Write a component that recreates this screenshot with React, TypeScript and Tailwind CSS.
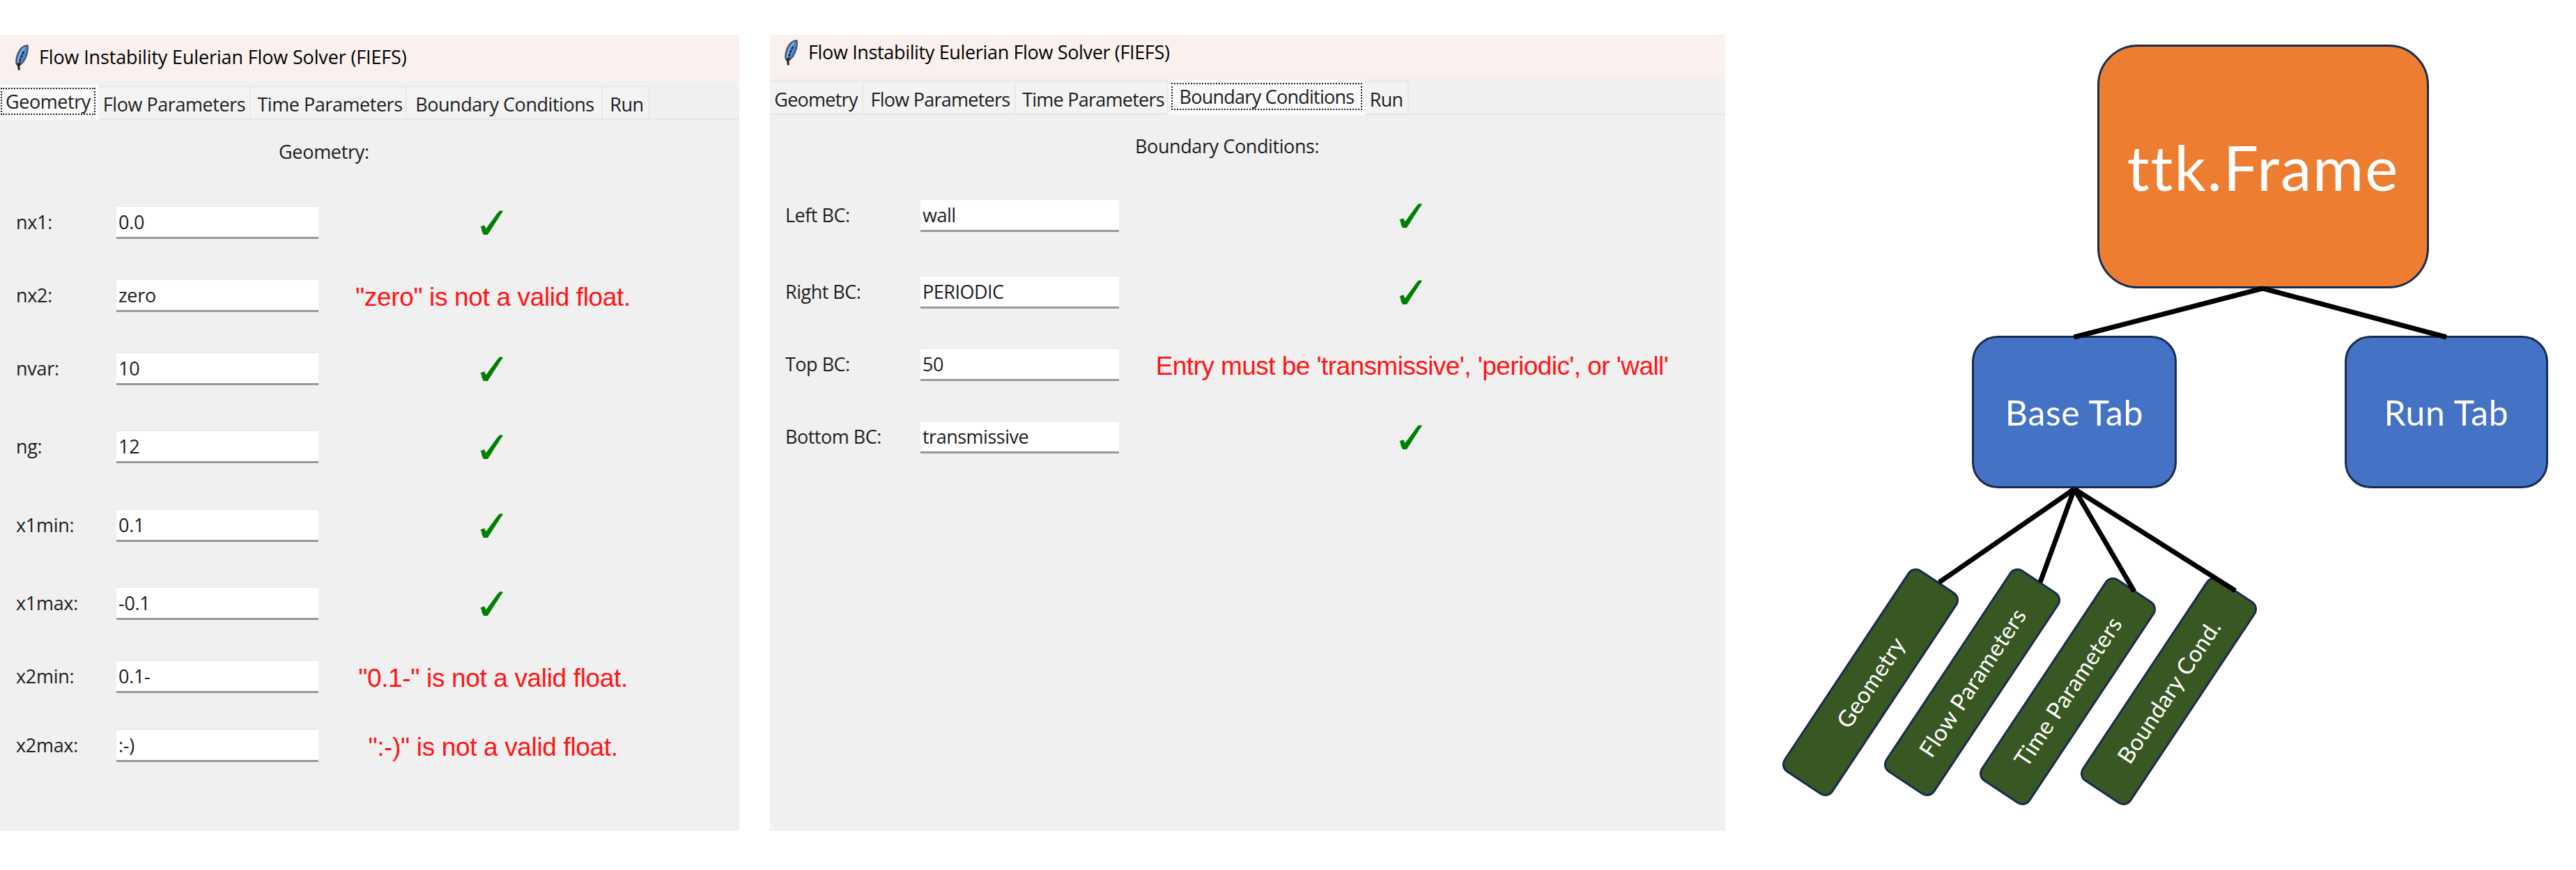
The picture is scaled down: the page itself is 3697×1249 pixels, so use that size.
type Row = { label: string; value: string; error?: string; gap: string };

type WindowProps = {
  tabs: { name: string; width: string }[];
  active: string;
  heading: string;
  headingClass: string;
  rows: Row[];
  windowClass: string;
  titleClass: string;
  titleTextClass: string;
  tabBarClass: string;
  tabClass: string;
  rowClass: string;
  labelClass: string;
  errorClass: string;
};

function Feather() {
  return (
    <svg viewBox="0 0 20 37" className="h-[37px] w-[20px] shrink-0">
      <path
        d="M18.5 1C13 1.5 7.5 6 4.5 13C2.5 18 1.5 24 3 28.5L7 30C11 27 15.5 21.5 17.5 14C18.8 9 19.3 4 18.5 1Z"
        fill="#4a86cf"
        stroke="#4a5058"
        strokeWidth="2"
      />
      <path d="M14.5 4C9 10 5.5 18 5 26" fill="none" stroke="#8fb9ea" strokeWidth="2" />
      <path d="M13 10C9.5 16 7.500 21 6.500 29" fill="none" stroke="#15202e" strokeWidth="2.4" strokeDasharray="4 1.5" />
      <path d="M5 27L6.500 36.500" stroke="#222" strokeWidth="3" />
    </svg>
  );
}

function Check() {
  return (
    <svg viewBox="0 0 33 36" className="h-[36px] w-[33px]">
      <path
        d="M32.500 0.500H28L24 5L19 12L13 20L9.500 25L7.800 25.500L6.500 21.500L3.500 22L0.300 24L2 26L2.500 30L5 35H11L12.500 32.500L15.500 28L20.500 20L25.500 12.500L28.500 7.500L32.500 2Z"
        fill="#008000"
      />
    </svg>
  );
}

function SolverWindow(p: WindowProps) {
  return (
    <section className={"flex h-[1143px] flex-col bg-[#f0f0f0] font-['Open_Sans',sans-serif] text-[27px] leading-[36px] text-[#1c1c22] " + p.windowClass}>
      <header className={"flex items-center bg-[#faf0ee] text-black " + p.titleClass}>
        <Feather />
        <h1 className={"whitespace-nowrap " + p.titleTextClass}>Flow Instability Eulerian Flow Solver (FIEFS)</h1>
      </header>
      <nav className={"flex items-end border-b-[2px] border-[#e6e6e6] " + p.tabBarClass}>
        {p.tabs.map((t) =>
          t.name === p.active ? (
            <div key={t.name} className={"-mb-[2px] flex h-[51px] flex-col bg-[#fafafa] pt-[5px] " + t.width}>
              <div className={"flex h-[39px] items-center justify-center whitespace-nowrap border-[2px] border-dotted border-[#222] pt-px " + p.tabClass}>
                {t.name}
              </div>
            </div>
          ) : (
            <div
              key={t.name}
              className={"flex h-[47px] items-center justify-center whitespace-nowrap border-t-[2px] border-r-[2px] border-[#e8e8e8] bg-[#f3f3f3] pt-[5px] " + p.tabClass + " " + t.width}
            >
              {t.name}
            </div>
          ),
        )}
      </nav>
      <h2 className={"whitespace-nowrap " + p.headingClass}>{p.heading}</h2>
      {p.rows.map((r) => (
        <div key={r.label} className={"grid h-[47px] shrink-0 items-center " + p.rowClass + " " + r.gap}>
          <label className={"pb-[2px] whitespace-nowrap " + p.labelClass}>{r.label}</label>
          <div className="flex h-[47px] items-center border-t border-b-[3px] border-t-[#e8e8e8] border-b-[#999] bg-white pl-[3px]">
            {r.value}
          </div>
          <div className="flex justify-center">
            {r.error ? (
              <span className={"pt-[4px] font-['Liberation_Sans',sans-serif] text-[37px] leading-[42px] whitespace-nowrap text-[#ff1414] " + p.errorClass}>
                {r.error}
              </span>
            ) : (
              <span className="pr-[4px]">
                <Check />
              </span>
            )}
          </div>
        </div>
      ))}
    </section>
  );
}

const geometryRows: Row[] = [
  { label: "nx1:", value: "0.0", gap: "mb-[58px]" },
  { label: "nx2:", value: "zero", error: '"zero" is not a valid float.', gap: "mb-[58px]" },
  { label: "nvar:", value: "10", gap: "mb-[65px]" },
  { label: "ng:", value: "12", gap: "mb-[66px]" },
  { label: "x1min:", value: "0.1", gap: "mb-[65px]" },
  { label: "x1max:", value: "-0.1", gap: "mb-[58px]" },
  { label: "x2min:", value: "0.1-", error: '"0.1-" is not a valid float.', gap: "mb-[52px]" },
  { label: "x2max:", value: ":-)", error: '":-)" is not a valid float.', gap: "mb-0" },
];

const boundaryRows: Row[] = [
  { label: "Left BC:", value: "wall", gap: "mb-[63px]" },
  { label: "Right BC:", value: "PERIODIC", gap: "mb-[57px]" },
  { label: "Top BC:", value: "50", error: "Entry must be 'transmissive', 'periodic', or 'wall'", gap: "mb-[57px]" },
  { label: "Bottom BC:", value: "transmissive", gap: "mb-0" },
];

const leaves = [
  { name: "Geometry", pos: "left-[34px] top-[887px]" },
  { name: "Flow Parameters", pos: "left-[180px] top-[887px]" },
  { name: "Time Parameters", pos: "left-[317px] top-[900px]" },
  { name: "Boundary Cond.", pos: "left-[462px] top-[900px]" },
];

function ClassDiagram() {
  return (
    <section className="relative h-[1149px] w-[1221px] font-['Lato',sans-serif] text-white">
      <div className="absolute top-[14px] left-[534px] flex h-[350px] w-[476px] items-center justify-center rounded-[58px] border-[3px] border-[#172c51] bg-[#ed7d31] text-[89px] leading-none tracking-[2px]">
        ttk.Frame
      </div>
      <div className="absolute top-[432px] left-[354px] flex h-[219px] w-[294px] items-center justify-center rounded-[37px] border-[3px] border-[#172c51] bg-[#4472c4] text-[50px] leading-none tracking-[0.7px]">
        Base Tab
      </div>
      <div className="absolute top-[432px] left-[889px] flex h-[219px] w-[292px] items-center justify-center rounded-[37px] border-[3px] border-[#172c51] bg-[#4472c4] text-[50px] leading-none tracking-[0.7px]">
        Run Tab
      </div>
      {leaves.map((l) => (
        <div
          key={l.name}
          className={"absolute flex h-[85px] w-[349px] -rotate-[56.4deg] items-center justify-center rounded-[14px] border-[3px] border-[#172c51] bg-[#385723] text-[33px] leading-none tracking-[0.4px] whitespace-nowrap " + l.pos}
        >
          {l.name}
        </div>
      ))}
      <svg viewBox="0 0 1221 1149" className="absolute inset-0 h-[1149px] w-[1221px]" fill="none" stroke="#000" strokeWidth="7">
        <path d="M771.500 364L500.500 434" />
        <path d="M771.500 364L1035 434" />
        <path d="M501 652L307 786" />
        <path d="M501 652L452 786" />
        <path d="M501 652L587 799" />
        <path d="M501 652L732 798" />
      </svg>
    </section>
  );
}

export default function App() {
  return (
    <main className="flex h-[1249px] w-[3697px] items-start overflow-hidden bg-white pt-[50px]">
      <SolverWindow
        windowClass="w-[1061px]"
        titleClass="h-[68px] pb-[4px] pl-[21px]"
        titleTextClass="pl-[15px] tracking-[-0.15px]"
        tabBarClass="h-[54px]"
        tabClass="tracking-[-0.45px]"
        tabs={[
          { name: "Geometry", width: "w-[142px] pl-px pr-[5px]" },
          { name: "Flow Parameters", width: "w-[218px]" },
          { name: "Time Parameters", width: "w-[224px] pl-[5px]" },
          { name: "Boundary Conditions", width: "w-[281px] pl-[2px]" },
          { name: "Run", width: "w-[67px] pl-[4px]" },
        ]}
        active="Geometry"
        heading="Geometry:"
        headingClass="mt-[28px] mb-[60px] pl-[400px] tracking-[-0.3px]"
        rows={geometryRows}
        rowClass="grid-cols-[167px_290px_501px] tracking-[-0.3px]"
        labelClass="pl-[23px]"
        errorClass="tracking-[-0.35px]"
      />
      <SolverWindow
        windowClass="ml-[44px] w-[1371px]"
        titleClass="h-[62px] pb-[12px] pl-[20px]"
        titleTextClass="pl-[15px] tracking-[-0.35px]"
        tabBarClass="h-[53px]"
        tabClass="tracking-[-0.75px]"
        tabs={[
          { name: "Geometry", width: "w-[134px]" },
          { name: "Flow Parameters", width: "w-[219px] pl-[4px]" },
          { name: "Time Parameters", width: "w-[219px] pl-[5px]" },
          { name: "Boundary Conditions", width: "w-[282px] px-[4px]" },
          { name: "Run", width: "w-[63px]" },
        ]}
        active="Boundary Conditions"
        heading="Boundary Conditions:"
        headingClass="mt-[27px] mb-[58px] pl-[524px] tracking-[-0.4px]"
        rows={boundaryRows}
        rowClass="grid-cols-[216px_285px_841px] tracking-[-0.5px]"
        labelClass="pl-[22px]"
        errorClass="tracking-[-0.56px]"
      />
      <ClassDiagram />
    </main>
  );
}
